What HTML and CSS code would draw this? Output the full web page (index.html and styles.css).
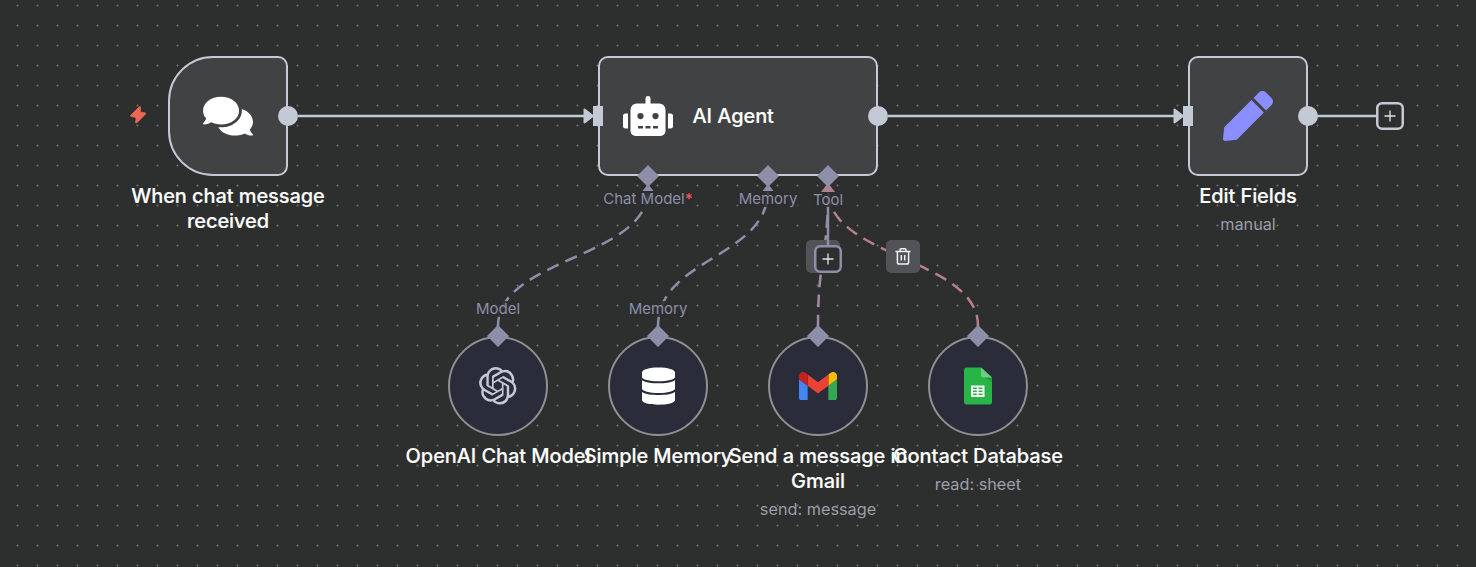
FILE: index.html
```html
<!DOCTYPE html>
<html lang="en">
<head>
<meta charset="utf-8">
<title>Workflow canvas</title>
<link rel="stylesheet" href="styles.css">
</head>
<body>
<main class="canvas">
  <svg class="edges" width="1476" height="567" viewBox="0 0 1476 567">
    <defs>
      <linearGradient id="mix" gradientUnits="userSpaceOnUse" x1="0" y1="190" x2="0" y2="326">
        <stop offset="0" stop-color="#a88a9f"/><stop offset="1" stop-color="#a18ba6"/>
      </linearGradient>
    </defs>
    <path class="main-edge" d="M298 116H586M888 116H1176M1317 116H1377"/>
    <path class="arrow" d="M584.500 109.500L593 116L584.500 122.500ZM1174.500 109.500L1183 116L1174.500 122.500Z"/>
    <path class="sub-edge" d="M498 326C498 258 648 258 648 190"/>
    <path class="sub-edge" d="M658 326C658 258 768 258 768 190"/>
    <path class="sub-edge mixed" d="M818 326C818 258 828 258 828 190"/>
    <path class="sub-edge pink" d="M978 326C978 258 828 258 828 190"/>
    <path class="tip" d="M648 184L653.500 191H642.500ZM768 184L773.500 191H762.500Z"/>
    <path class="tip-pink" d="M828 183L835 192H821Z"/>
  </svg>

  <span class="label model">Model</span>
  <span class="label memory">Memory</span>
  <span class="trash ghost"></span>
  <span class="trash">
    <svg width="18" height="20" viewBox="0 0 18 20"><path d="M1.500 4.500H16.500M6 4.300V2.800Q6 1.700 7.100 1.700H10.900Q12 1.700 12 2.800V4.300M3.400 4.800V15.200Q3.400 17 5.200 17H12.800Q14.600 17 14.600 15.200V4.800M7.300 8V13.400M10.700 8V13.400"/></svg>
  </span>

  <section class="node trigger">
    <svg class="icon" width="50" height="44.400" viewBox="0 0 576 512"><path d="M416 192c0-88.400-93.100-160-208-160S0 103.600 0 192c0 34.300 14.100 65.900 38 92-13.400 30.200-35.500 54.200-35.800 54.500-2.200 2.300-2.800 5.700-1.500 8.700S4.800 352 8 352c36.600 0 66.900-12.300 88.700-25 32.200 15.700 70.300 25 111.300 25 114.900 0 208-71.600 208-160zm122 220c23.900-26 38-57.700 38-92 0-66.900-53.500-124.200-129.300-148.100.9 6.600 1.300 13.300 1.300 20.100 0 105.900-107.700 192-240 192-10.800 0-21.300-.8-31.700-1.900C207.800 439.600 281.800 480 368 480c41 0 79.100-9.200 111.300-25 21.800 12.700 52.100 25 88.700 25 3.200 0 6.100-1.900 7.300-4.800 1.300-2.900.7-6.300-1.500-8.700-.3-.3-22.400-24.200-35.800-54.500z"/></svg>
    <svg class="bolt" width="18" height="20" viewBox="0 0 18 20"><path d="M10.400 1.700L1.600 10.300Q1.200 11.300 2.400 11.600L7.100 12.400L6.600 17.600Q7.200 18.500 8.100 17.600L16.600 9Q17 7.900 15.800 7.700L11.200 6.900L11.600 2Q11.200 1.100 10.400 1.700Z"/></svg>
    <i class="output"></i>
    <div class="caption"><p class="name">When chat message received</p></div>
  </section>

  <section class="node agent">
    <svg class="icon" width="50" height="40" viewBox="0 0 640 512"><path d="M32 224H64V416H32A32 32 0 0 1 0 384V256A32 32 0 0 1 32 224Zm512-48V448a64 64 0 0 1-64 64H160a64 64 0 0 1-64-64V176a80 80 0 0 1 80-80H288V32a32 32 0 0 1 64 0V96H464A80 80 0 0 1 544 176ZM264 256a40 40 0 1 0-40 40A40 40 0 0 0 264 256Zm-8 128H192v32h64Zm96 0H288v32h64ZM456 256a40 40 0 1 0-40 40A40 40 0 0 0 456 256Zm-8 128H384v32h64ZM640 256V384a32 32 0 0 1-32 32H576V224h32A32 32 0 0 1 640 256Z"/></svg>
    <p class="name">AI Agent</p>
    <i class="input"></i>
    <i class="output"></i>
  </section>
  <span class="label chat-model">Chat Model<b>*</b></span>
  <span class="label agent-memory">Memory</span>
  <span class="label tool">Tool</span>
  <svg class="edges" width="1476" height="567" viewBox="0 0 1476 567">
    <path class="tool-stem" d="M828 187V192M828 207V246"/>
    <path class="diamond" d="M648 165L659 176L648 187L637 176ZM768 165L779 176L768 187L757 176ZM828 165L839 176L828 187L817 176Z"/>
  </svg>
  <svg class="plus tool-plus" width="28" height="28" viewBox="0 0 28 28"><rect x="1.250" y="1.250" width="25.500" height="25.500" rx="5"/><path d="M8.500 14H19.500M14 8.500V19.500"/></svg>

  <section class="node edit">
    <svg class="icon pen" width="50" height="50" viewBox="0 0 512 512"><path d="M290.740 93.240l128.020 128.020-277.990 277.990-114.140 12.600C11.350 513.540-1.560 500.620.14 485.340l12.700-114.220 277.900-277.880zm207.200-19.060l-60.110-60.110c-18.750-18.750-49.160-18.750-67.910 0l-56.550 56.550 128.020 128.020 56.550-56.550c18.750-18.760 18.750-49.160 0-67.910z"/></svg>
    <i class="input"></i>
    <i class="output"></i>
    <div class="caption"><p class="name">Edit Fields</p><p class="detail">manual</p></div>
  </section>
  <svg class="plus end-plus" width="28" height="28" viewBox="0 0 28 28"><rect x="1.250" y="1.250" width="25.500" height="25.500" rx="5"/><path d="M8.500 14H19.500M14 8.500V19.500"/></svg>

  <section class="node round openai">
    <svg class="icon gray" width="37.500" height="37.500" viewBox="0 0 24 24"><path d="M22.2819 9.8211a5.9847 5.9847 0 0 0-.5157-4.9108 6.0462 6.0462 0 0 0-6.5098-2.9A6.0651 6.0651 0 0 0 4.9807 4.1818a5.9847 5.9847 0 0 0-3.9977 2.9 6.0462 6.0462 0 0 0 .7427 7.0966 5.98 5.98 0 0 0 .511 4.9107 6.051 6.051 0 0 0 6.5146 2.9001A5.9847 5.9847 0 0 0 13.2599 24a6.0557 6.0557 0 0 0 5.7718-4.2058 5.9894 5.9894 0 0 0 3.9977-2.9001 6.0557 6.0557 0 0 0-.7475-7.0729zm-9.022 12.6081a4.4755 4.4755 0 0 1-2.8764-1.0408l.1419-.0804 4.7783-2.7582a.7948.7948 0 0 0 .3927-.6813v-6.7369l2.02 1.1686a.071.071 0 0 1 .038.052v5.5826a4.504 4.504 0 0 1-4.4945 4.4944zm-9.6607-4.1254a4.4708 4.4708 0 0 1-.5346-3.0137l.142.0852 4.783 2.7582a.7712.7712 0 0 0 .7806 0l5.8428-3.3685v2.3324a.0804.0804 0 0 1-.0332.0615L9.74 19.9502a4.4992 4.4992 0 0 1-6.1408-1.6464zM2.3408 7.8956a4.485 4.485 0 0 1 2.3655-1.9728V11.6a.7664.7664 0 0 0 .3879.6765l5.8144 3.3543-2.0201 1.1685a.0757.0757 0 0 1-.071 0l-4.8303-2.7865A4.504 4.504 0 0 1 2.3408 7.872zm16.5963 3.8558L13.1038 8.364 15.1192 7.2a.0757.0757 0 0 1 .071 0l4.8303 2.7913a4.4944 4.4944 0 0 1-.6765 8.1042v-5.6772a.79.79 0 0 0-.407-.667zm2.0107-3.0231l-.142-.0852-4.7735-2.7818a.7759.7759 0 0 0-.7854 0L9.409 9.2297V6.8974a.0662.0662 0 0 1 .0284-.0615l4.8303-2.7866a4.4992 4.4992 0 0 1 6.6802 4.66zM8.3065 12.863l-2.02-1.1638a.0804.0804 0 0 1-.038-.0567V6.0742a4.4992 4.4992 0 0 1 7.3757-3.4537l-.142.0805L8.704 5.459a.7948.7948 0 0 0-.3927.6813zm1.0976-2.3654l2.602-1.4998 2.6069 1.4998v2.9994l-2.5974 1.4997-2.6067-1.4997Z"/></svg>
    <div class="caption"><p class="name">OpenAI Chat Model</p></div>
  </section>

  <section class="node round simple">
    <svg class="icon database" width="34" height="38" viewBox="-0.500 0 34 38"><path d="M.500 5.500C.500 2.500 8 .500 17 .500S33.500 2.500 33.500 5.500V10C33.500 12.500 26 14.300 17 14.300S.500 12.500 .500 10ZM.500 13.200C4 15.600 10.500 16.300 17 16.300S30 15.600 33.500 13.200V21.500C33.500 24 26 26 17 26S.500 24 .500 21.500ZM.500 25C4 27.400 10.500 28 17 28S30 27.400 33.500 25V33C33.500 36 26 37.700 17 37.700S.500 36 .500 33Z"/></svg>
    <div class="caption"><p class="name">Simple Memory</p></div>
  </section>

  <section class="node round gmail">
    <svg class="icon" width="38" height="28.500" viewBox="52 42 88 66"><path fill="#4285f4" d="M58 108h14V74L52 59v43c0 3.320 2.690 6 6 6"/><path fill="#34a853" d="M120 108h14c3.320 0 6-2.690 6-6V59l-20 15"/><path fill="#fbbc04" d="M120 48v26l20-15v-8c0-7.420-8.470-11.650-14.400-7.200"/><path fill="#ea4335" d="M72 74V48l24 18 24-18v26L96 92"/><path fill="#c5221f" d="M52 51v8l20 15V48l-5.600-4.200c-5.940-4.450-14.400-.220-14.400 7.200"/></svg>
    <div class="caption"><p class="name">Send a message in Gmail</p><p class="detail">send: message</p></div>
  </section>

  <section class="node round sheet">
    <svg class="icon" width="28" height="38" viewBox="0 0 28 38"><path fill="#28b446" d="M2.500 .500H17L28 10.500V35Q28 37.500 25.500 37.500H2.500Q0 37.500 0 35V3Q0 .500 2.500 .500Z"/><path fill="#219b38" d="M19 9.200L28 15V10.500Z"/><path fill="#6ace7c" d="M17 .500L28 10.500H19.500Q17 10.500 17 8Z"/><path fill="#fff" fill-rule="evenodd" d="M7 18.500H20.500V30H7ZM9 20.500V22H12.800V20.500ZM14.500 20.500V22H18.500V20.500ZM9 23.600V25H12.800V23.600ZM14.500 23.600V25H18.500V23.600ZM9 26.600V28H12.800V26.600ZM14.500 26.600V28H18.500V26.600Z"/></svg>
    <div class="caption"><p class="name">Contact Database</p><p class="detail">read: sheet</p></div>
  </section>
  <svg class="edges" width="1476" height="567" viewBox="0 0 1476 567">
    <path class="diamond" d="M498 325L509 336L498 347L487 336ZM658 325L669 336L658 347L647 336ZM818 325L829 336L818 347L807 336ZM978 325L989 336L978 347L967 336Z"/>
  </svg>
</main>
</body>
</html>
```
FILE: styles.css
```css
* { box-sizing: border-box; }
body { margin: 0; background: #2d2e2e; }
p { margin: 0; }
.canvas {
  position: relative;
  width: 1476px;
  height: 567px;
  overflow: hidden;
  font-family: Inter, "Liberation Sans", sans-serif;
  background: radial-gradient(circle at 10.500px 10.500px, #6e6f6f 0.400px, #2d2e2e 1.500px) 7px -5px / 20px 20px #2d2e2e;
}
.edges { position: absolute; left: 0; top: 0; fill: none; }
.main-edge { stroke: #c3c9d5; stroke-width: 2.500; }
.arrow { fill: #c3c9d5; stroke: #c3c9d5; stroke-width: 2; stroke-linejoin: round; }
.sub-edge { stroke: #8d8ea8; stroke-width: 2.500; stroke-dasharray: 10 10; stroke-linecap: square; }
.sub-edge.mixed { stroke: url(#mix); }
.sub-edge.pink { stroke: #b78088; }
.tip { fill: #8d8ea8; }
.tip-pink { fill: #b78088; }
.tool-stem { stroke: #8d8ea8; stroke-width: 2.500; }
.diamond { fill: #8d8ea8; }

.node {
  position: absolute;
  display: flex;
  align-items: center;
  justify-content: center;
  width: 120px;
  height: 120px;
  border: 2px solid #c3c9d5;
  border-radius: 10px;
  background: #414244;
}
.trigger { left: 168px; top: 56px; border-radius: 45px 10px 10px 45px; }
.agent { left: 598px; top: 56px; width: 280px; justify-content: flex-start; gap: 19.500px; padding-left: 23px; }
.edit { left: 1188px; top: 56px; }
.round { top: 336px; width: 100px; height: 100px; border-color: #8f9093; border-radius: 50%; background: #2b2c39; }
.openai { left: 448px; }
.simple { left: 608px; }
.gmail { left: 768px; }
.sheet { left: 928px; }
.icon { fill: #fff; flex: none; }
.pen { fill: #8a8eff; }
.gray { fill: #c3c9d5; }
.bolt { position: absolute; left: -41px; top: 47px; fill: #ee6654; stroke: #ee6654; stroke-width: 0.800; stroke-linejoin: round; }

.output, .input { position: absolute; background: #c3c9d5; }
.output { right: -12px; top: 48px; width: 20px; height: 20px; border-radius: 50%; }
.input { left: -7px; top: 48px; width: 10px; height: 20px; }

.caption {
  position: absolute;
  top: 100%;
  left: 50%;
  width: 200px;
  margin-left: -100px;
  padding-top: 10px;
  display: flex;
  flex-direction: column;
  gap: 5px;
  text-align: center;
}
.name { color: #fff; font-size: 20px; font-weight: 500; line-height: 25px; letter-spacing: -0.080px; -webkit-text-stroke: 0.150px #fff; }
.detail { color: #9a9fa9; font-size: 16.250px; line-height: 20px; }

.label {
  position: absolute;
  transform: translateX(-50%);
  color: #8d8ea8;
  background: rgba(45, 46, 46, 0.850);
  font-size: 15px;
  line-height: 16px;
  white-space: nowrap;
}
.label b { color: #f0505c; font-weight: 600; }
.model { left: 498px; top: 301px; }
.memory { left: 658px; top: 301px; }
.chat-model { left: 648px; top: 191px; }
.agent-memory { left: 768px; top: 191px; }
.tool { left: 828px; top: 192px; }

.trash {
  position: absolute;
  left: 886px;
  top: 240px;
  display: flex;
  align-items: center;
  justify-content: center;
  width: 34px;
  height: 33px;
  border-radius: 5px;
  background: #525356;
}
.trash svg { fill: none; stroke: #f2f2f2; stroke-width: 1.500; }
.ghost { left: 806px; }

.plus { position: absolute; fill: #2d2e2e; stroke: #c3c9d5; stroke-width: 2.500; }
.plus path { stroke: #e4e5e8; stroke-width: 1.300; }
.tool-plus { left: 813.700px; top: 245px; stroke: #8d8ea8; }
.end-plus { left: 1376.200px; top: 102px; }
```
